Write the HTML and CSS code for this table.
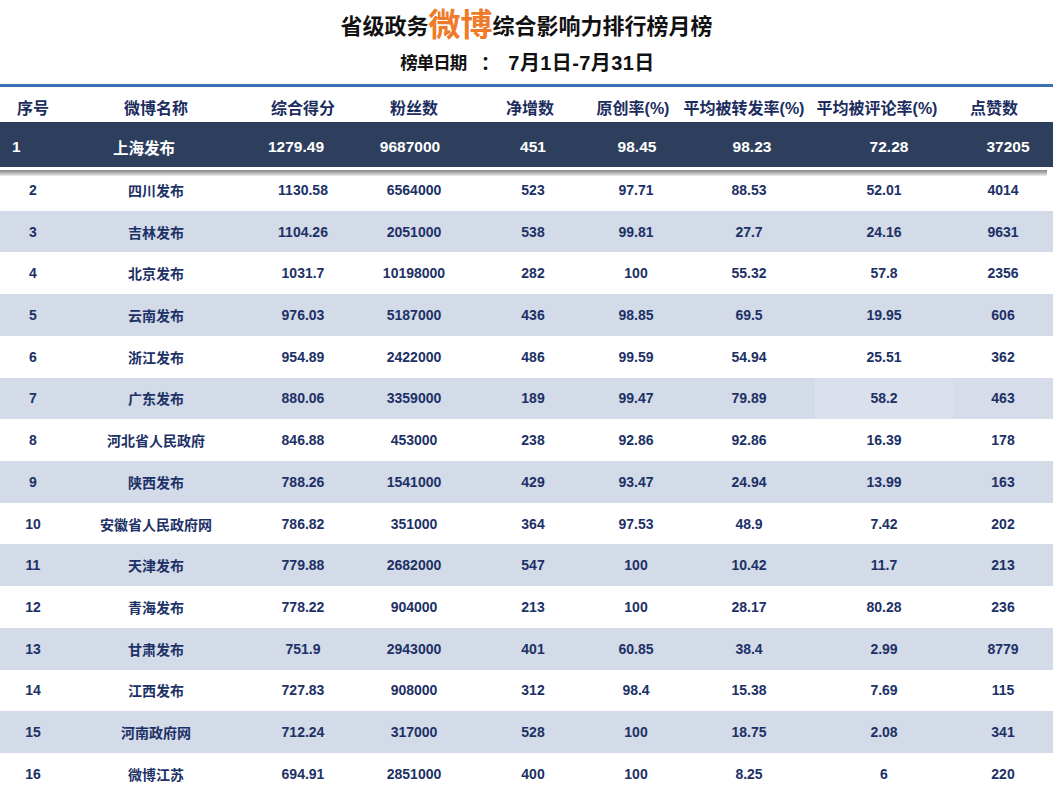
FILE: index.html
```html
<!DOCTYPE html>
<html lang="zh-CN">
<head>
<meta charset="utf-8">
<title>省级政务微博综合影响力排行榜月榜</title>
<link rel="stylesheet" href="styles.css">
</head>
<body>
<div class="page">
  <header class="titles">
    <h1 class="title">省级政务<span class="accent">微博</span>综合影响力排行榜月榜</h1>
    <div class="subtitle"><span class="label">榜单日期</span><span class="colon">：</span><span class="dates">7月1日-7月31日</span></div>
  </header>
  <div class="rule"></div>
  <div class="row head">
    <div>序号</div><div>微博名称</div><div>综合得分</div><div>粉丝数</div>
    <div class="h5">净增数</div><div class="h6">原创率(%)</div><div class="h7">平均被转发率(%)</div><div class="h8">平均被评论率(%)</div><div class="h9">点赞数</div>
  </div>
  <div class="top">
    <div class="first">1</div><div>上海发布</div><div>1279.49</div><div>9687000</div><div>451</div><div>98.45</div><div>98.23</div><div>72.28</div><div>37205</div>
  </div>
  <div class="body">
    <div class="row"><div>2</div><div>四川发布</div><div>1130.58</div><div>6564000</div><div>523</div><div>97.71</div><div>88.53</div><div>52.01</div><div>4014</div></div>
    <div class="row alt"><div>3</div><div>吉林发布</div><div>1104.26</div><div>2051000</div><div>538</div><div>99.81</div><div>27.7</div><div>24.16</div><div>9631</div></div>
    <div class="row"><div>4</div><div>北京发布</div><div>1031.7</div><div>10198000</div><div>282</div><div>100</div><div>55.32</div><div>57.8</div><div>2356</div></div>
    <div class="row alt"><div>5</div><div>云南发布</div><div>976.03</div><div>5187000</div><div>436</div><div>98.85</div><div>69.5</div><div>19.95</div><div>606</div></div>
    <div class="row"><div>6</div><div>浙江发布</div><div>954.89</div><div>2422000</div><div>486</div><div>99.59</div><div>54.94</div><div>25.51</div><div>362</div></div>
    <div class="row alt"><div>7</div><div>广东发布</div><div>880.06</div><div>3359000</div><div>189</div><div>99.47</div><div>79.89</div><div class="tint-a">58.2</div><div class="tint-b">463</div></div>
    <div class="row"><div>8</div><div>河北省人民政府</div><div>846.88</div><div>453000</div><div>238</div><div>92.86</div><div>92.86</div><div>16.39</div><div>178</div></div>
    <div class="row alt"><div>9</div><div>陕西发布</div><div>788.26</div><div>1541000</div><div>429</div><div>93.47</div><div>24.94</div><div>13.99</div><div>163</div></div>
    <div class="row"><div>10</div><div>安徽省人民政府网</div><div>786.82</div><div>351000</div><div>364</div><div>97.53</div><div>48.9</div><div>7.42</div><div>202</div></div>
    <div class="row alt"><div>11</div><div>天津发布</div><div>779.88</div><div>2682000</div><div>547</div><div>100</div><div>10.42</div><div>11.7</div><div>213</div></div>
    <div class="row"><div>12</div><div>青海发布</div><div>778.22</div><div>904000</div><div>213</div><div>100</div><div>28.17</div><div>80.28</div><div>236</div></div>
    <div class="row alt"><div>13</div><div>甘肃发布</div><div>751.9</div><div>2943000</div><div>401</div><div>60.85</div><div>38.4</div><div>2.99</div><div>8779</div></div>
    <div class="row"><div>14</div><div>江西发布</div><div>727.83</div><div>908000</div><div>312</div><div>98.4</div><div>15.38</div><div>7.69</div><div>115</div></div>
    <div class="row alt"><div>15</div><div>河南政府网</div><div>712.24</div><div>317000</div><div>528</div><div>100</div><div>18.75</div><div>2.08</div><div>341</div></div>
    <div class="row"><div>16</div><div>微博江苏</div><div>694.91</div><div>2851000</div><div>400</div><div>100</div><div>8.25</div><div>6</div><div>220</div></div>
  </div>
</div>
</body>
</html>
```
FILE: styles.css
```css
html, body {
  margin: 0;
  padding: 0;
  background: #ffffff;
}
body {
  font-family: "Liberation Sans", "Noto Sans CJK SC", sans-serif;
  width: 1053px;
  height: 795px;
  overflow: hidden;
}
.page {
  display: flex;
  flex-direction: column;
}
.titles {
  display: flex;
  flex-direction: column;
  align-items: center;
  padding-top: 8px;
  height: 84px;
  box-sizing: border-box;
}
.title {
  margin: 0;
  font-size: 22px;
  line-height: 38px;
  height: 38px;
  font-weight: bold;
  color: #111111;
  white-space: nowrap;
}
.accent {
  color: #ef7a2a;
  font-size: 32px;
  vertical-align: top;
  line-height: 34px;
}
.subtitle {
  display: flex;
  align-items: center;
  height: 30px;
  font-weight: bold;
  color: #111111;
  white-space: nowrap;
  padding-left: 2px;
}
.label {
  font-size: 17.5px;
  letter-spacing: -1px;
}
.colon {
  display: inline-block;
  width: 42px;
  text-align: center;
  font-size: 19px;
  text-indent: 6px;
}
.dates {
  font-size: 20px;
  letter-spacing: 0.4px;
}
.rule {
  height: 3px;
  background: #3a70b4;
}
.row {
  display: grid;
  grid-template-columns: 57px 198px 96px 126px 112px 94px 132px 138px 100px;
  height: 41.73px;
  align-items: stretch;
  font-size: 14px;
  font-weight: bold;
  color: #1c3166;
}
.row > div {
  display: flex;
  align-items: center;
  justify-content: center;
  white-space: nowrap;
}
.row > div:first-child {
  padding-left: 9px;
}
.row.head {
  height: 35px;
  font-size: 16px;
  color: #1b2d5e;
}
.row.head > div {
  padding-top: 5px;
}
.row.head .h5 { padding-right: 6px; }
.row.head .h6 { padding-right: 6px; }
.row.head .h7 { padding-right: 10px; }
.row.head .h8 { padding-right: 14px; }
.row.head .h9 { padding-right: 18px; }
.row.alt {
  background: #d3dae8;
}
.row .tint-a {
  background: #dae0ec;
}
.row .tint-b {
  background: #d6dce9;
}
.top {
  position: relative;
  display: grid;
  grid-template-columns: 35px 218px 86px 142px 104px 104px 126px 148px 90px;
  height: 45px;
  background: #2e3f5e;
  color: #ffffff;
  font-weight: bold;
  font-size: 15.5px;
}
.top > div {
  display: flex;
  align-items: center;
  justify-content: center;
  white-space: nowrap;
  padding-top: 4px;
}
.top > .first {
  justify-content: flex-start;
  padding-left: 12px;
}
.top::after {
  content: "";
  position: absolute;
  left: 0;
  right: 6px;
  top: calc(100% + 3px);
  height: 6px;
  background: linear-gradient(#858585, #b5b5b5 50%, #ececec);
  z-index: 2;
}
.body {
  margin-top: 2px;
  display: flex;
  flex-direction: column;
}
```
